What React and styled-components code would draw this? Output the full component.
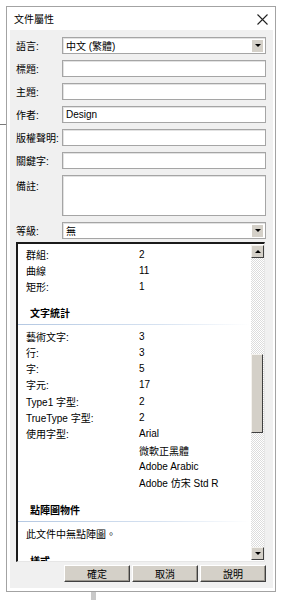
import React from "react";
import styled, { createGlobalStyle } from "styled-components";

const GlobalStyle = createGlobalStyle`
  html, body {
    margin: 0;
    padding: 0;
  }
  body {
    width: 281px;
    height: 600px;
    overflow: hidden;
    background-color: #fff;
    background-image:
      linear-gradient(#7a7a7a, #7a7a7a),
      linear-gradient(#c9c9c9, #c9c9c9);
    background-repeat: no-repeat;
    background-size: 8px 1px, 5px 10px;
    background-position: 0 124px, 91px 592px;
    font-family: "Liberation Sans", "Noto Sans CJK TC", sans-serif;
    font-size: 10px;
    color: #000;
  }
`;

const Dialog = styled.div`
  margin: 6px 0 0 6px;
  width: 270px;
  height: 586px;
  box-sizing: border-box;
  border: 1px solid #a3a3a3;
  background: #fff;
  padding: 0 2px 3px 3px;
  display: flex;
  flex-direction: column;
`;

const TitleBar = styled.div`
  height: 23px;
  flex: none;
  display: flex;
  align-items: center;
  justify-content: space-between;
  padding: 0 5px 0 4px;
`;

const Title = styled.span`
  font-size: 10px;
`;

const CloseButton = styled.svg`
  width: 11px;
  height: 11px;
  margin-bottom: -1px;
`;

const Body = styled.div`
  flex: 1;
  background: #f0f0f0;
  padding: 7px 7px 6px 6px;
  display: flex;
  flex-direction: column;
  min-height: 0;
`;

const Form = styled.div`
  display: grid;
  grid-template-columns: 46px 204px;
  row-gap: 6px;
  flex: none;
`;

const Label = styled.div`
  display: flex;
  align-items: ${(p) => (p.$top ? "flex-start" : "center")};
  padding-top: ${(p) => (p.$top ? "3px" : "0")};
  white-space: nowrap;
`;

const Field = styled.div`
  box-sizing: border-box;
  height: ${(p) => p.$h || 17}px;
  border: 1px solid #a5a5a5;
  box-shadow: inset 1px 1px 0 #e2e2e2;
  background: #fff;
  display: flex;
  align-items: center;
  padding: 0 2px 0 3px;
`;

const FieldText = styled.span`
  flex: 1;
  white-space: nowrap;
`;

const DropButton = styled.div`
  width: 11px;
  height: 12px;
  background: #d4d0c8;
  display: flex;
  align-items: center;
  justify-content: center;
  &::after {
    content: "";
    border-left: 3px solid transparent;
    border-right: 3px solid transparent;
    border-top: 3px solid #000;
  }
`;

const Panel = styled.div`
  margin-top: 3px;
  width: 249px;
  height: 320px;
  box-sizing: border-box;
  flex: none;
  display: flex;
  border-top: 2px solid #1a1a1a;
  border-left: 2px solid #1a1a1a;
  border-right: 1px solid #e6e6e6;
  border-bottom: 1px solid #e6e6e6;
  background: #fff;
`;

const Content = styled.div`
  flex: 1;
  overflow: hidden;
  padding-top: 2px;
`;

const Row = styled.div`
  display: flex;
  height: 16.3px;
  align-items: center;
  padding-left: 8px;
  white-space: nowrap;
`;

const Key = styled.span`
  width: 113px;
  flex: none;
`;

const SectionTitle = styled.div`
  margin-top: ${(p) => p.$mt ?? 11}px;
  margin-bottom: ${(p) => p.$gap ?? 3}px;
  height: 16px;
  line-height: 16px;
  padding: 0 0 3px 12px;
  font-weight: bold;
  white-space: nowrap;
  background: linear-gradient(to right, #b4c8e2, #d6e2f1 60%, rgba(255, 255, 255, 0)) no-repeat
    left bottom / 100% 1px;
`;

const ScrollBar = styled.div`
  width: 14px;
  flex: none;
  display: flex;
  flex-direction: column;
  padding: 1px 0 1px 1px;
  box-sizing: border-box;
`;

const ArrowButton = styled.div`
  height: 13px;
  width: 13px;
  box-sizing: border-box;
  flex: none;
  background: #d4d0c8;
  border: 1px solid;
  border-color: #f4f2ee #404040 #404040 #f4f2ee;
  display: flex;
  align-items: center;
  justify-content: center;
  &::after {
    content: "";
    border-left: 3px solid transparent;
    border-right: 3px solid transparent;
    ${(p) =>
      p.$up ? "border-bottom: 3px solid #000;" : "border-top: 3px solid #000;"}
  }
`;

const Track = styled.div`
  flex: 1;
  display: flex;
  flex-direction: column;
  background-color: #fff;
  background-image: repeating-conic-gradient(#dcdcdc 0 25%, #fff 0 50%);
  background-size: 2px 2px;
`;

const Thumb = styled.div`
  flex: none;
  width: 12px;
  box-sizing: border-box;
  background: #d4d0c8;
  border: 1px solid;
  border-color: #f4f2ee #404040 #404040 #f4f2ee;
`;

const Buttons = styled.div`
  margin-top: 3px;
  display: flex;
  justify-content: flex-end;
  gap: 2px;
  flex: none;
`;

const Button = styled.button`
  width: 66px;
  height: 17px;
  box-sizing: border-box;
  padding: 0;
  font: inherit;
  color: #000;
  background: #d4d0c8;
  border: 1px solid;
  border-color: #fff #404040 #404040 #fff;
  box-shadow: inset -1px -1px 0 #9a968e;
`;

const fields = [
  { label: "語言:", value: "中文 (繁體)", drop: true },
  { label: "標題:" },
  { label: "主題:" },
  { label: "作者:", value: "Design" },
  { label: "版權聲明:" },
  { label: "關鍵字:" },
  { label: "備註:", h: 41, top: true },
  { label: "等級:", value: "無", drop: true },
];

const shapeStats = [
  ["群組:", "2"],
  ["曲線", "11"],
  ["矩形:", "1"],
];

const textStats = [
  ["藝術文字:", "3"],
  ["行:", "3"],
  ["字:", "5"],
  ["字元:", "17"],
  ["Type1 字型:", "2"],
  ["TrueType 字型:", "2"],
  ["使用字型:", "Arial"],
  ["", "微軟正黑體"],
  ["", "Adobe Arabic"],
  ["", "Adobe 仿宋 Std R"],
];

const thumb = { top: 96, height: 79 };

export default function App() {
  return (
    <>
      <GlobalStyle />
      <Dialog>
        <TitleBar>
          <Title>文件屬性</Title>
          <CloseButton viewBox="0 0 11 11">
            <path d="M0.5 0.5 L10.5 10.5 M10.5 0.5 L0.5 10.5" stroke="#222" strokeWidth="1.1" />
          </CloseButton>
        </TitleBar>
        <Body>
          <Form>
            {fields.map((f) => (
              <React.Fragment key={f.label}>
                <Label $top={f.top}>{f.label}</Label>
                <Field $h={f.h}>
                  <FieldText>{f.value}</FieldText>
                  {f.drop && <DropButton />}
                </Field>
              </React.Fragment>
            ))}
          </Form>
          <Panel>
            <Content>
              {shapeStats.map(([k, v]) => (
                <Row key={k}>
                  <Key>{k}</Key>
                  {v}
                </Row>
              ))}
              <SectionTitle>文字統計</SectionTitle>
              {textStats.map(([k, v], i) => (
                <Row key={i}>
                  <Key>{k}</Key>
                  {v}
                </Row>
              ))}
              <SectionTitle $mt={12} $gap={3}>點陣圖物件</SectionTitle>
              <Row>此文件中無點陣圖。</Row>
              <SectionTitle $mt={13}>樣式</SectionTitle>
            </Content>
            <ScrollBar>
              <ArrowButton $up />
              <Track>
                <div style={{ height: thumb.top }} />
                <Thumb style={{ height: thumb.height }} />
              </Track>
              <ArrowButton />
            </ScrollBar>
          </Panel>
          <Buttons>
            <Button>確定</Button>
            <Button>取消</Button>
            <Button>說明</Button>
          </Buttons>
        </Body>
      </Dialog>
    </>
  );
}
